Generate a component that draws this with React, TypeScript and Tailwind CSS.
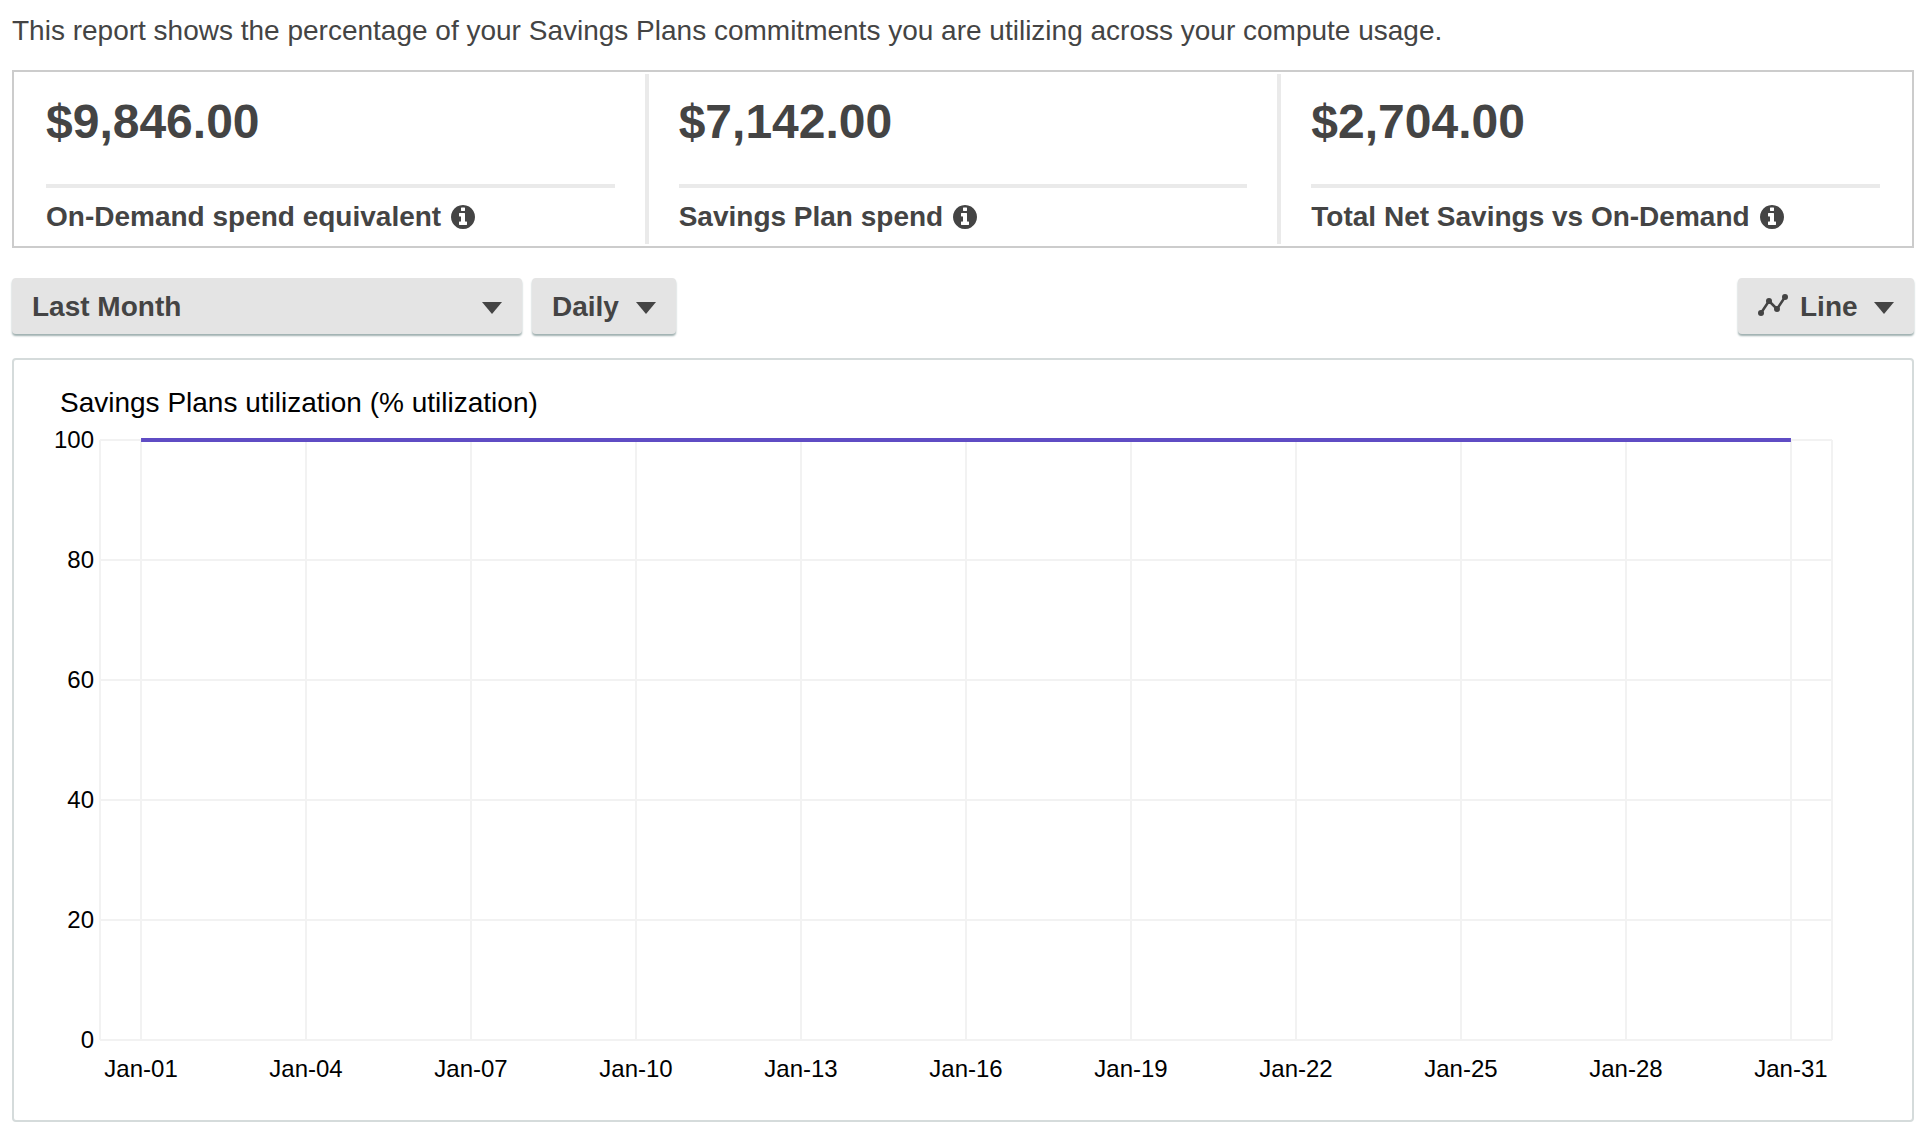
import React from 'react';

interface Summary {
  amount: string;
  label: string;
}

const summaries: Summary[] = [
  { amount: '$9,846.00', label: 'On-Demand spend equivalent' },
  { amount: '$7,142.00', label: 'Savings Plan spend' },
  { amount: '$2,704.00', label: 'Total Net Savings vs On-Demand' },
];

const yTicks = [100, 80, 60, 40, 20, 0];
const days = [1, 4, 7, 10, 13, 16, 19, 22, 25, 28, 31];

// the first and last day sit a little inside the plot's edges
const xOf = (day: number) => `${2.37 + ((day - 1) / 30) * 95.26}%`;
const yOf = (value: number) => `${100 - value}%`;

const selectClass =
  'h-14 appearance-none rounded bg-[#e4e4e4] pt-[2px] text-[28px] font-bold text-[#444] shadow-[0_2px_2px_#9fb0b0] cursor-pointer';

const InfoIcon: React.FC = () => (
  <svg className="h-6 w-6 fill-current" viewBox="0 0 1536 1536" fillRule="evenodd" aria-hidden="true">
    <path d="M1024 1248v-160q0-14-9-23t-23-9h-96v-512q0-14-9-23t-23-9h-320q-14 0-23 9t-9 23v160q0 14 9 23t23 9h96v320h-96q-14 0-23 9t-9 23v160q0 14 9 23t23 9h448q14 0 23-9t9-23zM896 352v-160q0-14-9-23t-23-9h-192q-14 0-23 9t-9 23v160q0 14 9 23t23 9h192q14 0 23-9t9-23zM1536 768q0 209-103 385.500t-279.500 279.500-385.500 103-385.500-103-279.500-279.500-103-385.500 103-385.500 279.500-279.500 385.500-103 385.500 103 279.500 279.500 103 385.500z" />
  </svg>
);

const Caret: React.FC = () => (
  <svg
    className="pointer-events-none absolute right-5 top-6 h-3 w-5 fill-[#444]"
    viewBox="0 0 20 12"
    aria-hidden="true"
  >
    <path d="M0 0h20L10 12z" />
  </svg>
);

const SummaryCard: React.FC<Summary> = ({ amount, label }) => (
  <div className="flex-1 border-r-4 border-[#eaeaea] px-[30px] pt-5 pb-[9px] last:border-r-0">
    <p className="text-5xl leading-[56px] font-bold">{amount}</p>
    <div className="mt-[34px] flex items-center gap-[10px] border-t-4 border-[#eaeaea] pt-[11px]">
      <h2 className="text-[28px] leading-9 font-bold">{label}</h2>
      <button type="button" aria-label={`About ${label}`} className="cursor-pointer">
        <InfoIcon />
      </button>
    </div>
  </div>
);

const Toolbar: React.FC = () => (
  <div className="mt-[30px] flex gap-[10px]">
    <div className="relative w-[510px]">
      <select aria-label="Date range" className={`${selectClass} w-full pl-5 pr-12`}>
        <option>Last Month</option>
      </select>
      <Caret />
    </div>
    <div className="relative">
      <select aria-label="Granularity" className={`${selectClass} w-36 pl-5 pr-12`}>
        <option>Daily</option>
      </select>
      <Caret />
    </div>
    <div className="relative ml-auto">
      <svg
        className="pointer-events-none absolute left-5 top-4 h-6 w-8 fill-[#444] stroke-[#444]"
        viewBox="0 0 32 24"
        aria-hidden="true"
      >
        <path d="M3 19 11 7l8 8L27 3" fill="none" strokeWidth="2.5" />
        <g stroke="none">
          <circle cx="3" cy="19" r="3" />
          <circle cx="11" cy="7" r="3" />
          <circle cx="19" cy="15" r="3" />
          <circle cx="27" cy="3" r="3" />
        </g>
      </svg>
      <select aria-label="Chart type" className={`${selectClass} w-44 pl-[62px] pr-12`}>
        <option>Line</option>
      </select>
      <Caret />
    </div>
  </div>
);

const UtilizationChart: React.FC = () => (
  <section className="mt-6 rounded border-2 border-[#d5dbdb] pt-[27px] pr-20 pb-20 pl-[86px] text-black">
    <h3 className="-ml-10 text-[28px] leading-8">Savings Plans utilization (% utilization)</h3>
    <svg
      className="mt-[21px] block h-[600px] w-full overflow-visible"
      role="img"
      aria-label="Savings Plans utilization"
    >
      <g stroke="#f2f2f2" strokeWidth="2">
        {yTicks.map((t) => (
          <line key={t} x1="0" x2="100%" y1={yOf(t)} y2={yOf(t)} />
        ))}
        {days.map((d) => (
          <line key={d} x1={xOf(d)} x2={xOf(d)} y1="0" y2="100%" />
        ))}
        <line x1="0" x2="0" y1="0" y2="100%" />
        <line x1="100%" x2="100%" y1="0" y2="100%" />
      </g>
      <line x1={xOf(1)} x2={xOf(31)} y1="0" y2="0" stroke="#5f4cc4" strokeWidth="4" />
      <g fontSize="24">
        {yTicks.map((t) => (
          <text key={t} x="-6" y={yOf(t)} dy="8" textAnchor="end">
            {t}
          </text>
        ))}
        {days.map((d) => (
          <text key={d} x={xOf(d)} y="100%" dy="37" textAnchor="middle">
            {`Jan-${String(d).padStart(2, '0')}`}
          </text>
        ))}
      </g>
    </svg>
  </section>
);

const App: React.FC = () => {
  return (
    <main className="bg-white pt-[13px] pr-[10px] pb-[18px] pl-3 font-['Helvetica_Neue','Liberation_Sans',Arial,sans-serif] text-[#444]">
      <p className="text-[28px] leading-9">
        This report shows the percentage of your Savings Plans commitments you are utilizing across your compute usage.
      </p>
      <div className="mt-[21px] flex border-2 border-[#ccc] p-[2px]">
        {summaries.map((s) => (
          <SummaryCard key={s.label} {...s} />
        ))}
      </div>
      <Toolbar />
      <UtilizationChart />
    </main>
  );
};

export default App;
